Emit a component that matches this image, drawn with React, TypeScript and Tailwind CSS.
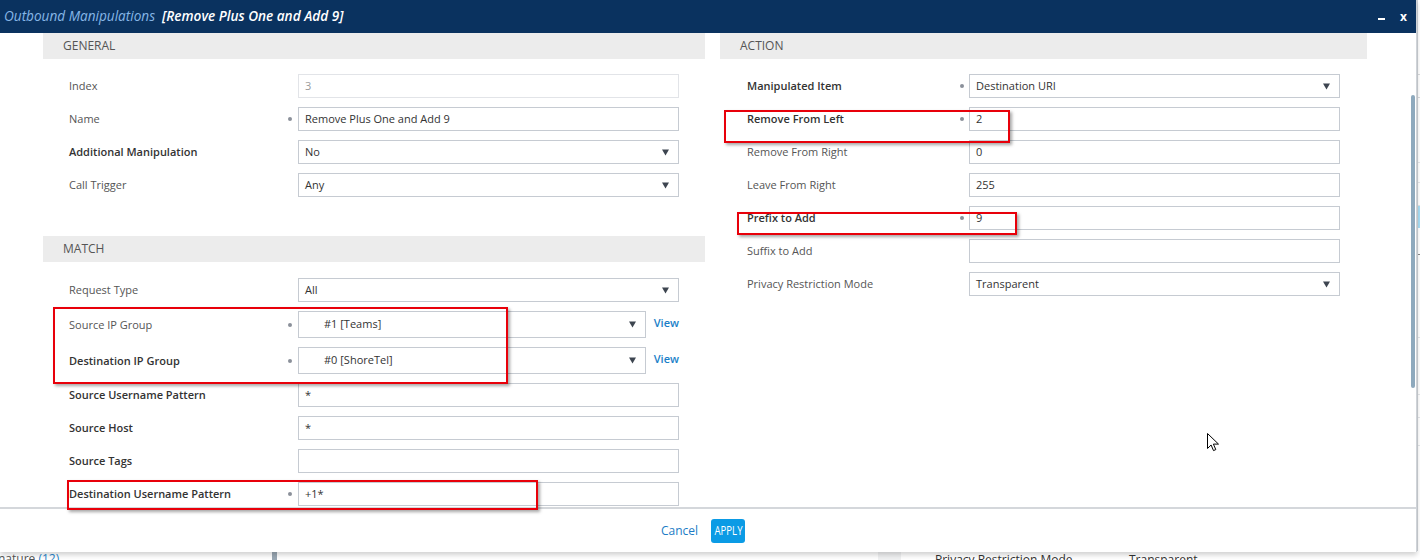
import React from "react";

type Field = {
  label: string;
  value: string;
  bold?: boolean;
  dot?: boolean;
  select?: boolean;
  disabled?: boolean;
  tall?: boolean;
  view?: boolean;
};

const GENERAL: Field[] = [
  { label: "Index", value: "3", disabled: true },
  { label: "Name", value: "Remove Plus One and Add 9", dot: true },
  { label: "Additional Manipulation", value: "No", bold: true, select: true },
  { label: "Call Trigger", value: "Any", select: true },
];

const MATCH: Field[] = [
  { label: "Request Type", value: "All", select: true },
  { label: "Source IP Group", value: "#1 [Teams]", dot: true, select: true, tall: true, view: true },
  { label: "Destination IP Group", value: "#0 [ShoreTel]", bold: true, dot: true, select: true, tall: true, view: true },
  { label: "Source Username Pattern", value: "*", bold: true },
  { label: "Source Host", value: "*", bold: true },
  { label: "Source Tags", value: "", bold: true },
  { label: "Destination Username Pattern", value: "+1*", bold: true, dot: true },
];

const ACTION: Field[] = [
  { label: "Manipulated Item", value: "Destination URI", bold: true, dot: true, select: true },
  { label: "Remove From Left", value: "2", bold: true, dot: true },
  { label: "Remove From Right", value: "0" },
  { label: "Leave From Right", value: "255" },
  { label: "Prefix to Add", value: "9", bold: true, dot: true },
  { label: "Suffix to Add", value: "" },
  { label: "Privacy Restriction Mode", value: "Transparent", select: true },
];

function Caret() {
  return (
    <svg width="7" height="7" viewBox="0 0 7 7" className="shrink-0">
      <path d="M0 0.5h7L3.5 6.5z" fill="#3d4550" />
    </svg>
  );
}

function Row({ f, side }: { f: Field; side: "left" | "right" }) {
  const box = f.disabled
    ? "border-[#e2e4e8] text-[#9a9a9a]"
    : "border-[#c6cbd2] text-[#333]";
  return (
    <div className={`flex items-center mb-[9px] ${f.tall ? "h-[27px]" : "h-[24px]"}`}>
      <div
        className={`${side === "left" ? "w-[215px]" : "w-[208px]"} pt-[1px] text-[11px] ${
          f.bold ? "font-semibold text-[#333]" : "text-[#555]"
        }`}
      >
        {f.label}
      </div>
      <div className={`w-[14px] flex items-center ${side === "left" ? "pl-[4px]" : "pl-[5px]"}`}>
        {f.dot && <span className="block w-[4px] h-[4px] rounded-full bg-[#8b909a]" />}
      </div>
      <div className={`flex items-center h-full ${side === "left" ? "w-[381px]" : "w-[371px]"}`}>
        <div
          className={`flex items-center justify-between h-full border bg-white text-[11px] ${box} ${
            f.view ? "w-[348px] pl-[25px]" : "flex-1 pl-[6px]"
          } pr-[9px]`}
        >
          <span>{f.value}</span>
          {f.select && <Caret />}
        </div>
        {f.view && (
          <span className="ml-[8px] text-[11px] font-semibold text-[#1a7fc8] -mt-[2px]">View</span>
        )}
      </div>
    </div>
  );
}

function Header({ title }: { title: string }) {
  return (
    <div className="h-[26px] bg-[#ececec] pl-[20px] flex items-center text-[12px] text-[#555]">
      {title}
    </div>
  );
}

function RedBox({ className }: { className: string }) {
  return (
    <div
      className={`absolute border-2 border-[#e8000a] shadow-[2px_2px_3px_rgba(0,0,0,0.35)] pointer-events-none ${className}`}
    />
  );
}

function Background() {
  return (
    <div className="absolute inset-0 flex flex-col bg-white">
      <div className="flex flex-1">
        <div className="flex-1" />
        <div className="w-[3px] ml-auto border-l border-[#cfd3d8] flex flex-col">
          <div className="h-[75px] border-b border-[#d8dadd]" />
          <div className="h-[23px] border-b border-[#d8dadd]" />
          <div className="h-[65px] border-b border-[#e4e6e9]" />
          <div className="h-[20px] border-b border-[#e4e6e9]" />
          <div className="h-[23px] border-b border-[#e4e6e9]" />
          <div className="h-[22px] bg-[#a8def5]" />
          <div className="h-[27px] border-b border-[#888]" />
          <div className="h-[83px] border-b border-[#e4e6e9]" />
          <div className="h-[57px] border-b border-[#e4e6e9]" />
          <div className="h-[23px] border-b border-[#e4e6e9]" />
          <div className="h-[28px] border-b border-[#e4e6e9]" />
        </div>
      </div>
      <div className="h-[9px] flex items-start text-[12px] leading-[14px] overflow-visible">
        <div className="w-[274px] -ml-[2px] pt-[1px] text-[#555] whitespace-nowrap">
          nature <span className="text-[#2a86cc]">(12)</span>
        </div>
        <div className="w-[5px] h-full bg-[#9aa8b4]" />
        <div className="w-[601px]" />
        <div className="w-[23px] h-full bg-[#f0f1f2]" />
        <div className="w-[34px]" />
        <div className="w-[194px] pt-[2px] text-[#333] whitespace-nowrap">Privacy Restriction Mode</div>
        <div className="pt-[2px] text-[#333]">Transparent</div>
      </div>
    </div>
  );
}

export default function App() {
  return (
    <div className="relative w-[1420px] h-[560px] overflow-hidden font-['Open_Sans','Noto_Sans',sans-serif]">
      <Background />

      <div className="absolute left-0 top-0 w-[1417px] h-[552px] bg-white border-r border-[#cfd3d8] shadow-[0_3px_5px_rgba(0,0,0,0.18)] flex flex-col">
        <div className="h-[33px] bg-[#0a325f] flex items-center pl-[4px] shrink-0">
          <span className="italic text-[13.6px] text-[#86b6e6]">Outbound Manipulations</span>
          <span className="italic font-semibold text-[13.6px] text-white ml-[7px]">[Remove Plus One and Add 9]</span>
          <div className="ml-auto flex items-center mr-[9px]">
            <div className="w-[7px] h-[2px] bg-white mt-[5px]" />
            <span className="ml-[15px] text-[12px] font-bold text-white leading-none">x</span>
          </div>
        </div>

        <div className="h-[474px] overflow-hidden flex">
          <div className="flex gap-[15px] pl-[43px]">
            <div className="w-[662px]">
              <Header title="GENERAL" />
              <div className="pl-[26px] mt-[15px]">
                {GENERAL.map((f) => (
                  <Row key={f.label} f={f} side="left" />
                ))}
              </div>
              <div className="mt-[39px]">
                <Header title="MATCH" />
              </div>
              <div className="pl-[26px] mt-[16px]">
                {MATCH.map((f) => (
                  <Row key={f.label} f={f} side="left" />
                ))}
              </div>
            </div>
            <div className="w-[647px]">
              <Header title="ACTION" />
              <div className="pl-[27px] mt-[15px]">
                {ACTION.map((f) => (
                  <Row key={f.label} f={f} side="right" />
                ))}
              </div>
            </div>
          </div>
          <div className="ml-auto mr-[1px] pt-[62px]">
            <div className="w-[4px] h-[293px] rounded-full bg-[#8ea9bd]" />
          </div>
        </div>

        <div className="flex-1 border-t-2 border-[#d4d7db] flex items-center justify-center gap-[13px] pr-[10px]">
          <span className="text-[12px] text-[#1b7cc6]">Cancel</span>
          <div className="w-[34px] h-[24px] rounded-[3px] bg-[#0b9be5] flex items-center justify-center">
            <span className="inline-block text-[12px] text-white scale-x-[0.8]">APPLY</span>
          </div>
        </div>
      </div>

      <RedBox className="left-[53px] top-[307px] w-[455px] h-[77px]" />
      <RedBox className="left-[67px] top-[480px] w-[471px] h-[30px]" />
      <RedBox className="left-[724px] top-[110px] w-[286px] h-[33px]" />
      <RedBox className="left-[737px] top-[212px] w-[280px] h-[23px]" />

      <svg className="absolute left-[1207px] top-[433px]" width="12" height="19" viewBox="0 0 12 19">
        <path
          d="M0.5 0.5v15l3.6-3.5 2.4 5.6 2.3-1-2.4-5.5h5.1z"
          fill="white"
          stroke="black"
          strokeWidth="1"
          strokeLinejoin="miter"
        />
      </svg>
    </div>
  );
}
